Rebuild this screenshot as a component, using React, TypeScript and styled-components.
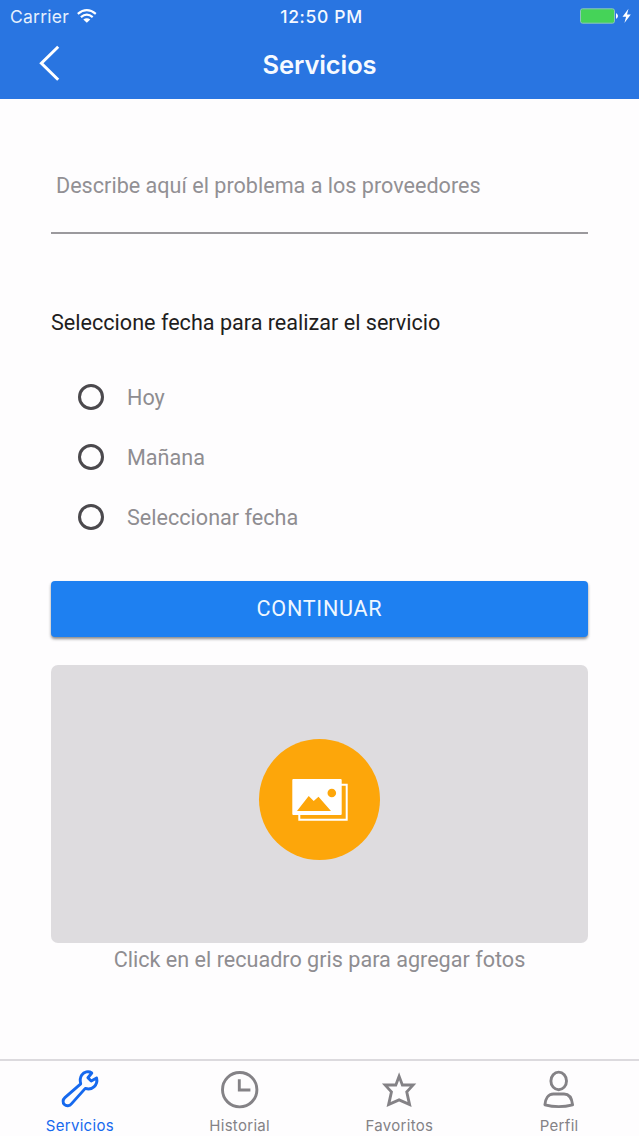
import React from "react";
import styled, { createGlobalStyle } from "styled-components";

const GlobalStyle = createGlobalStyle`
  *, *::before, *::after { box-sizing: border-box; }
  body { margin: 0; background: #fefdfe; }
`;

const Screen = styled.div`
  display: flex;
  flex-direction: column;
  height: 1136px;
  font-family: Roboto, "Liberation Sans", sans-serif;
  color: #8f8d91;
`;

const Header = styled.header`
  height: 98.5px;
  flex: none;
  background: #2975e1;
  color: #fff;
  font-family: Inter, "Liberation Sans", sans-serif;
`;

const StatusBar = styled.div`
  display: grid;
  grid-template-columns: 1fr auto 1fr;
  align-items: center;
  height: 32px;
  padding: 0 7px 0 10px;
`;

const Carrier = styled.div`
  display: flex;
  align-items: center;
  gap: 8px;
  font-size: 17.5px;
  letter-spacing: 0.25px;
  color: #e6f0fd;
`;

const Clock = styled.div`
  font-size: 17.5px;
  font-weight: 550;
  letter-spacing: 0.65px;
  padding-left: 1px;
  color: #f4f8ff;
`;

const Power = styled.div`
  display: flex;
  justify-content: flex-end;
`;

const NavBar = styled.div`
  display: grid;
  grid-template-columns: 60px 1fr 60px;
  align-items: center;
  height: 66px;
`;

const BackButton = styled.button`
  display: flex;
  justify-content: flex-end;
  padding: 0;
  border: 0;
  background: none;
  margin-top: -4px;
`;

const Title = styled.h1`
  margin: 0;
  text-align: center;
  font-size: 25.5px;
  line-height: 66px;
  font-weight: 570;
  letter-spacing: -0.1px;
  color: #f6faff;
`;

const Content = styled.main`
  flex: 1;
  display: flex;
  flex-direction: column;
  padding: 0 51px;
`;

const Description = styled.input`
  flex: none;
  height: 96px;
  margin-top: 39.5px;
  padding: 0 5px;
  border: 0;
  border-bottom: 2px solid #9b999d;
  background: transparent;
  font: 21.6px Roboto, sans-serif;
  outline: 0;
  &::placeholder { color: #929094; opacity: 1; }
`;

const Question = styled.h2`
  margin: 74px 0 0;
  font-size: 21.6px;
  line-height: 30px;
  font-weight: 400;
  color: #1f1d21;
`;

const Options = styled.div`
  display: flex;
  flex-direction: column;
  margin-top: 29px;
  padding-left: 27px;
`;

const Option = styled.label`
  display: flex;
  align-items: center;
  gap: 23px;
  height: 60px;
  font-size: 21.6px;
`;

const Radio = styled.span`
  width: 26px;
  height: 26px;
  border: 3px solid #4b494d;
  border-radius: 50%;
`;

const Continue = styled.button`
  flex: none;
  height: 56px;
  margin-top: 33.5px;
  padding: 0 0 1px;
  border: 0;
  border-radius: 4px;
  background: #1e80f1;
  box-shadow: 0 2px 3px rgba(0, 0, 0, 0.45);
  color: #eff7ff;
  font: 21.6px Roboto, sans-serif;
  letter-spacing: 0.72px;
`;

const PhotoBox = styled.div`
  display: flex;
  align-items: center;
  justify-content: center;
  flex: none;
  height: 277.5px;
  margin-top: 28.5px;
  padding-bottom: 9px;
  border-radius: 7px;
  background: #dedcdf;
`;

const PhotoCircle = styled.div`
  width: 121px;
  height: 121px;
  border-radius: 50%;
  background: #fda60a;
`;

const Hint = styled.p`
  margin: 2px 0 0;
  text-align: center;
  font-size: 21.6px;
  line-height: 30px;
`;

const TabBar = styled.nav`
  display: grid;
  grid-template-columns: repeat(4, 1fr);
  flex: none;
  height: 77px;
  border-top: 2px solid #dcdade;
`;

const Tab = styled.div<{ $active?: boolean }>`
  display: flex;
  flex-direction: column;
  align-items: center;
  padding-top: 8px;
  color: ${(p) => (p.$active ? "#1669ee" : "#848286")};
`;

const TabLabel = styled.span`
  margin-top: 7px;
  font: 15px/20px Inter, sans-serif;
  letter-spacing: 0.3px;
`;

const TabIcon = ({ children }: { children: React.ReactNode }) => (
  <svg width="40" height="40" viewBox="0 0 40 40" fill="none" stroke="currentColor" strokeWidth="2.9">
    {children}
  </svg>
);

const tabs = [
  {
    label: "Servicios",
    icon: (
      <path
        strokeLinejoin="round"
        d="M31.8 4C28.5 1.7 24 2.8 21.7 6.1C19.9 8.8 20 12 20.7 14.8L4.9 28.6C2.7 30.5 2.5 33.7 4.4 35.5C6.3 37.3 9.6 37.1 11.4 34.9L25.3 19.4C28.2 20.3 31.7 20 34.2 17.6C36.8 15.1 37.3 12 36.6 9L31.2 12.1L27.9 8.7Z"
      />
    ),
  },
  {
    label: "Historial",
    icon: (
      <>
        <circle cx="19.7" cy="20.7" r="17.2" />
        <path d="M19.3 10.3V21H30.4" />
      </>
    ),
  },
  {
    label: "Favoritos",
    icon: (
      <path
        fill="currentColor"
        stroke="none"
        fillRule="evenodd"
        d="M20.1 3.3L24.3 14.6H37.3L29.3 23.3L32.6 38L20.1 32.4L7.6 38L10.9 23.3L2.9 14.6H15.9ZM20.1 11.2L17.8 17.4H9.3L14 22.5L11.7 33L20.1 29.2L28.5 33L26.2 22.5L30.9 17.4H22.4Z"
      />
    ),
  },
  {
    label: "Perfil",
    icon: (
      <>
        <ellipse cx="19.7" cy="11.9" rx="7.8" ry="8.8" />
        <path
          strokeLinejoin="round"
          d="M14.5 25H25C30.5 25 33 30.5 33.6 35.8Q19.7 39.4 5.9 35.8C6.3 30.2 9 25 14.5 25Z"
        />
      </>
    ),
  },
];

export default function App() {
  return (
    <Screen>
      <GlobalStyle />
      <Header>
        <StatusBar>
          <Carrier>
            Carrier
            <svg width="20" height="15" viewBox="0 0 20 15" fill="none" stroke="#fff" strokeWidth="2.2">
              <path d="M.8 4.8Q9.8-2.4 18.8 4.8M3.9 8.1Q9.8 3.1 15.7 8.1" />
              <path d="M6.3 10.6Q9.8 7.8 13.3 10.6L9.8 13.8Z" fill="#fff" stroke="none" />
            </svg>
          </Carrier>
          <Clock>12:50 PM</Clock>
          <Power>
            <svg width="53" height="16" viewBox="0 0 53 16">
              <rect x="1.5" y=".8" width="34" height="14.4" rx="2" fill="#45d358" stroke="#8bc4c0" />
              <path d="M37 5Q41 8 37 11Z" fill="#fff" />
              <path d="M49.5.8L43.5 8.7H47.1L45.4 14.9L51.8 6.5H48Z" fill="#fff" />
            </svg>
          </Power>
        </StatusBar>
        <NavBar>
          <BackButton aria-label="Atrás">
            <svg width="22" height="38" viewBox="0 0 22 38" fill="none" stroke="#fff" strokeWidth="3">
              <path d="M20.2 2.8L3.4 19.3L20.2 35.8" />
            </svg>
          </BackButton>
          <Title>Servicios</Title>
        </NavBar>
      </Header>
      <Content>
        <Description placeholder="Describe aquí el problema a los proveedores" />
        <Question>Seleccione fecha para realizar el servicio</Question>
        <Options>
          {["Hoy", "Mañana", "Seleccionar fecha"].map((o) => (
            <Option key={o}>
              <Radio />
              {o}
            </Option>
          ))}
        </Options>
        <Continue>CONTINUAR</Continue>
        <PhotoBox>
          <PhotoCircle>
            <svg width="121" height="121" viewBox="0 0 121 121">
              <path d="M82 45.7H87.7V80.8H40.3V75" fill="none" stroke="#fff" strokeWidth="2" />
              <rect x="33.3" y="40" width="49.4" height="36" rx="1" fill="#fff" />
              <circle cx="72.8" cy="54" r="4.3" fill="#fda60a" />
              <path d="M38 72L49.7 57L54.7 62L59.5 57.7L72 72Z" fill="#fda60a" />
            </svg>
          </PhotoCircle>
        </PhotoBox>
        <Hint>Click en el recuadro gris para agregar fotos</Hint>
      </Content>
      <TabBar>
        {tabs.map((t, i) => (
          <Tab key={t.label} $active={i === 0}>
            <TabIcon>{t.icon}</TabIcon>
            <TabLabel>{t.label}</TabLabel>
          </Tab>
        ))}
      </TabBar>
    </Screen>
  );
}
